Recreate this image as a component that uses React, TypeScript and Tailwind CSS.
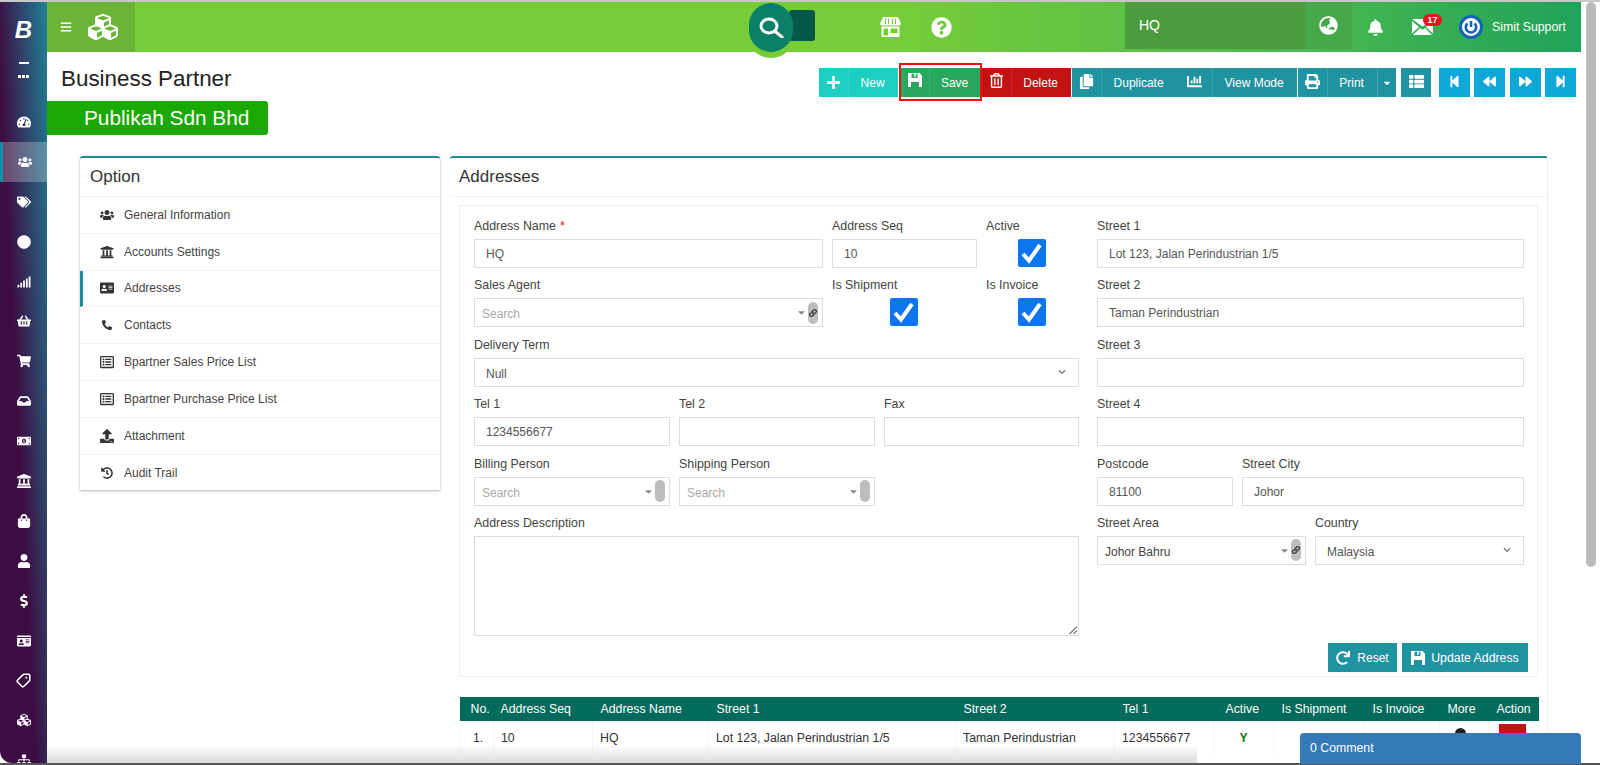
import type { ReactNode } from 'react';
import {
  FaAddressCard, FaBackward, FaBars, FaBell, FaCaretDown, FaChartBar, FaChevronDown, FaCircle, FaCopy,
  FaCubes, FaDollarSign, FaForward, FaGlobeAsia, FaHistory, FaIdCard, FaInbox, FaLandmark, FaLink, FaMoneyBillAlt,
  FaPhone, FaPlus, FaPrint, FaQuestionCircle, FaRedo, FaRegListAlt, FaRegTrashAlt, FaShoppingBag, FaShoppingBasket,
  FaShoppingCart, FaSignal, FaSitemap, FaStepBackward, FaStepForward, FaTachometerAlt, FaTags, FaThList,
  FaUniversity, FaUpload, FaUser, FaUsers,
} from 'react-icons/fa';
import { Tag } from 'lucide-react';

const SIDE_ICONS = [
  { icon: <FaTachometerAlt /> },
  { icon: <FaUsers />, active: true },
  { icon: <FaTags /> },
  { icon: <FaCircle /> },
  { icon: <FaSignal /> },
  { icon: <FaShoppingBasket /> },
  { icon: <FaShoppingCart /> },
  { icon: <FaInbox /> },
  { icon: <FaMoneyBillAlt /> },
  { icon: <FaLandmark /> },
  { icon: <FaShoppingBag /> },
  { icon: <FaUser /> },
  { icon: <FaDollarSign /> },
  { icon: <FaIdCard /> },
  { icon: <Tag size={15} strokeWidth={2.5} className="rotate-90" /> },
  { icon: <FaCubes /> },
  { icon: <FaSitemap /> },
];

const OPTIONS = [
  { label: 'General Information', icon: <FaUsers /> },
  { label: 'Accounts Settings', icon: <FaUniversity /> },
  { label: 'Addresses', icon: <FaAddressCard />, active: true },
  { label: 'Contacts', icon: <FaPhone className="text-[10px] scale-x-[-1]" /> },
  { label: 'Bpartner Sales Price List', icon: <FaRegListAlt /> },
  { label: 'Bpartner Purchase Price List', icon: <FaRegListAlt /> },
  { label: 'Attachment', icon: <FaUpload /> },
  { label: 'Audit Trail', icon: <FaHistory className="text-[12px]" /> },
];

function SaveIcon({ size = 14 }: { size?: number }) {
  return (
    <svg width={size} height={size} viewBox="0 0 14 14" fill="currentColor">
      <path fillRule="evenodd" d="M0 0H11.5L14 2.5V14H0ZM3.5 0.8V5H9.5V0.8H7.8V3.8H6.2V0.8ZM3 9V14H11V9Z" />
    </svg>
  );
}

function StoreIcon() {
  return (
    <svg width="21" height="20" viewBox="0 0 21 20" fill="currentColor">
      <path d="M3 0H18L21 6.5C21 8 19.8 8.6 18.8 8.6H2.2C1.2 8.6 0 8 0 6.5Z" />
      <path fill="#76cd38" d="M5 1.5H6V7H5ZM8 1.5H9V7H8ZM12 1.5H13V7H12ZM15 1.5H16V7H15Z" />
      <path fillRule="evenodd" d="M1.5 9.5H19.5V20H1.5ZM3.5 11.5V18.5H8V11.5ZM10.5 11.5V16H17.5V11.5Z" />
    </svg>
  );
}

function SearchGlyph() {
  return (
    <svg width="25" height="21" viewBox="0 0 25 21" fill="none" stroke="#fff" strokeWidth="3">
      <ellipse cx="10" cy="9" rx="8" ry="7" />
      <path d="M15.5 14L23 20" strokeLinecap="round" />
    </svg>
  );
}

function MailIcon() {
  return (
    <svg width="21" height="16" viewBox="0 0 21 16" fill="#fff">
      <path d="M0 0H21L10.5 7.5Z" />
      <path d="M0 2L7 8L0 14.5ZM21 2V14.5L14 8ZM8 9L10.5 11L13 9L20 16H1Z" />
    </svg>
  );
}

function PowerIcon() {
  return (
    <svg width="24" height="24" viewBox="0 0 24 24">
      <circle cx="12" cy="12" r="12" fill="#1463b5" />
      <circle cx="12" cy="12" r="9" fill="#fff" />
      <path d="M8.5 8.5A5.2 5.2 0 1 0 15.5 8.5" fill="none" stroke="#1463b5" strokeWidth="2.6" />
      <path d="M12 6V12" stroke="#1463b5" strokeWidth="2.6" />
    </svg>
  );
}

function Sidebar() {
  return (
    <aside className="w-[47px] shrink-0 rounded-bl-xl overflow-hidden text-white bg-[linear-gradient(87deg,#3c0d43_42%,#1f8296_100%)]">
      <div className="h-[60px] flex items-center justify-center pb-[4px] text-[24px] font-black italic">B</div>
      <div className="h-[40px] flex flex-col items-center">
        <div className="w-[10px] h-[2px] bg-white" />
        <div className="mt-[11px] flex gap-[1px]">
          <div className="w-[3px] h-[3px] bg-white" />
          <div className="w-[3px] h-[3px] bg-white" />
          <div className="w-[3px] h-[3px] bg-white" />
        </div>
      </div>
      {SIDE_ICONS.map((item, i) => (
        <div
          key={i}
          className={`h-[39.9px] flex items-center justify-center text-[14px] ${item.active ? 'bg-white/25 border-l-[3px] border-[#0d93a3]' : ''}`}
        >
          {item.icon}
        </div>
      ))}
    </aside>
  );
}

function Header() {
  return (
    <header className="h-[50px] shrink-0 flex items-center text-white bg-[linear-gradient(90deg,#76cd38_0%,#76cd38_55%,#4bb84e_82%,#1fa25a_100%)]">
      <div className="w-[88px] h-full flex items-center bg-[#6cb438] pl-[13px] gap-[16px]">
        <FaBars className="text-[12px]" />
        <FaCubes className="text-[30px]" />
      </div>
      <div className="ml-[614px] w-[66px] h-full relative">
        <div className="absolute left-[-2px] top-[28px] w-[48px] h-[28px] rounded-b-full bg-[#76cd38]" />
        <div className="absolute left-[40px] top-[8px] w-[26px] h-[31px] rounded-[3px] bg-[#05574a]" />
        <div className="absolute left-0 top-[1px] w-[44px] h-[49px] rounded-full bg-[#0b8068] flex items-center justify-center">
          <SearchGlyph />
        </div>
      </div>
      <span className="ml-[65px]"><StoreIcon /></span>
      <FaQuestionCircle className="ml-[30px] text-[21px]" />
      <div className="ml-[173px] w-[180px] h-[47px] mb-[3px] flex items-center pl-[14px] text-[14px] bg-[#4a9c3c]">HQ</div>
      <div className="w-[47px] h-[47px] mb-[3px] flex items-center justify-center text-[19px] bg-[#47a84a]">
        <FaGlobeAsia />
      </div>
      <FaBell className="ml-[15px] text-[17px]" />
      <div className="ml-[28px] relative">
        <MailIcon />
        <span className="absolute -top-[5px] -right-[9px] w-[19px] h-[12px] rounded-full bg-[#e8121f] text-[9px] font-bold leading-[12px] text-center">17</span>
      </div>
      <span className="ml-[26px]"><PowerIcon /></span>
      <span className="ml-[9px] text-[12.3px] whitespace-nowrap">Simit Support</span>
    </header>
  );
}

function ActionButton({
  icon,
  label,
  color,
  width,
  iconWidth = 'w-[30px]',
  iconPad = 'pb-[3px]',
  mark,
}: {
  icon: ReactNode;
  label: string;
  color: string;
  width: string;
  iconWidth?: string;
  iconPad?: string;
  mark?: boolean;
}) {
  return (
    <button className={`relative h-[29px] flex items-center text-white text-[12px] ${color} ${width}`}>
      <span className={`h-full flex items-center justify-center text-[15px] border-r border-white/10 shrink-0 ${iconWidth} ${iconPad}`}>{icon}</span>
      <span className="flex-1 text-center pr-[2px]">{label}</span>
      {mark && <span className="absolute -left-[1px] -right-[1px] -top-[5px] -bottom-[4px] border-2 border-[#f01010]" />}
    </button>
  );
}

function NavButton({ children }: { children: ReactNode }) {
  return <button className="w-[31px] h-[29px] flex items-center justify-center text-white text-[13px] pb-[2px] bg-[#0da8d8]">{children}</button>;
}

function Toolbar() {
  return (
    <div className="flex pt-[16px]">
      <ActionButton icon={<FaPlus />} label="New" color="bg-[#1dcfc0]" width="w-[79px]" iconPad="pb-0" />
      <div className="w-[2px]" />
      <ActionButton icon={<SaveIcon />} label="Save" color="bg-[#28a85e]" width="w-[81px]" iconPad="pb-[6px]" mark />
      <div className="w-[1px]" />
      <ActionButton icon={<FaRegTrashAlt />} label="Delete" color="bg-[#c31212]" width="w-[89px]" iconPad="pb-[4px]" />
      <div className="w-[1px]" />
      <ActionButton icon={<FaCopy />} label="Duplicate" color="bg-[#1f939f]" width="w-[105px]" />
      <ActionButton icon={<FaChartBar />} label="View Mode" color="bg-[#1f939f]" width="w-[120px]" iconWidth="w-[36px]" />
      <div className="w-[1px]" />
      <ActionButton icon={<FaPrint />} label="Print" color="bg-[#1f939f]" width="w-[79px]" />
      <button className="w-[19px] h-[29px] flex items-center justify-center text-white text-[10px] bg-[#1f939f] border-l border-white/20">
        <FaCaretDown />
      </button>
      <button className="ml-[5px] w-[30px] h-[29px] flex items-center justify-center text-white text-[15px] pb-[2px] bg-[#1f939f]">
        <FaThList />
      </button>
      <div className="ml-[8px] flex gap-[4.3px]">
        <NavButton><FaStepBackward /></NavButton>
        <NavButton><FaBackward /></NavButton>
        <NavButton><FaForward /></NavButton>
        <NavButton><FaStepForward /></NavButton>
      </div>
    </div>
  );
}

function OptionCard() {
  return (
    <section className="w-[360px] h-[334px] shrink-0 bg-white border-t-2 border-[#1f8a99] rounded-t-[3px] shadow-[0_1px_3px_rgba(0,0,0,0.3)]">
      <h2 className="h-[39px] flex items-center pl-[10px] text-[17px] text-[#333] border-b border-[#f2f2f2]">Option</h2>
      {OPTIONS.map(o => (
        <div
          key={o.label}
          className={`h-[36.8px] flex items-center text-[12px] text-[#444] border-b border-[#f4f4f4] last:border-b-0 ${o.active ? 'border-l-[3px] border-l-[#1f8a99] pl-[16px]' : 'pl-[19px]'}`}
        >
          <span className="w-[15px] flex justify-center text-[14px] text-[#333]">{o.icon}</span>
          <span className="ml-[10px]">{o.label}</span>
        </div>
      ))}
    </section>
  );
}

function Field({ label, width, required, children }: { label?: string; width: string; required?: boolean; children: ReactNode }) {
  return (
    <div className={`shrink-0 ${width}`}>
      <div className="h-[24px] leading-[22px] text-[12.4px] text-[#444] whitespace-nowrap">
        {label}
        {required && <span className="ml-[4px] text-[#e01010]">*</span>}
      </div>
      {children}
    </div>
  );
}

function TextBox({ value }: { value?: string }) {
  return <div className="h-[29px] border border-[#ddd] flex items-center pl-[11px] pt-[1px] text-[12px] text-[#555]">{value}</div>;
}

function SelectBox({ value }: { value: string }) {
  return (
    <div className="h-[29px] border border-[#ddd] flex items-center justify-between pl-[11px] pr-[12px] text-[12px] text-[#555]">
      <span className="pt-[3px]">{value}</span>
      <FaChevronDown className="text-[8px] text-[#777]" />
    </div>
  );
}

function SearchBox({ value, link }: { value?: string; link?: boolean }) {
  return (
    <div className="h-[29px] border border-[#ddd] flex items-center pl-[7px] text-[12px]">
      <span className={`pt-[3px] ${value ? 'text-[#444]' : 'text-[#aaa]'}`}>{value ?? 'Search'}</span>
      <FaCaretDown className="ml-auto text-[11px] text-[#888]" />
      <span className="ml-[1px] mr-[4px] w-[10px] h-[22px] rounded-full bg-[#bdbdbd] flex items-center justify-center text-[8px] text-[#333]">
        {link && <FaLink />}
      </span>
    </div>
  );
}

function CheckBox() {
  return (
    <div className="w-[28px] h-[28px] rounded-[2px] bg-[#0b76ef] flex items-center justify-center">
      <svg width="28" height="28" viewBox="0 0 28 28" fill="none" stroke="#fff" strokeWidth="4">
        <path d="M5 15L11 21.5L22 6" />
      </svg>
    </div>
  );
}

function Row({ children }: { children: ReactNode }) {
  return <div className="h-[59.4px] flex gap-[9px]">{children}</div>;
}

function AddressForm() {
  return (
    <div className="relative h-[472px] mx-[9px] mt-[8px] border border-[#eee] pl-[14px] pt-[9px] flex">
      <div className="w-[605px] shrink-0">
        <Row>
          <Field label="Address Name" required width="w-[349px]"><TextBox value="HQ" /></Field>
          <Field label="Address Seq" width="w-[145px]"><TextBox value="10" /></Field>
          <Field label="Active" width="w-[60px]"><div className="pl-[32px]"><CheckBox /></div></Field>
        </Row>
        <Row>
          <Field label="Sales Agent" width="w-[349px]"><SearchBox link /></Field>
          <Field label="Is Shipment" width="w-[145px]"><div className="pl-[58px]"><CheckBox /></div></Field>
          <Field label="Is Invoice" width="w-[60px]"><div className="pl-[32px]"><CheckBox /></div></Field>
        </Row>
        <Row>
          <Field label="Delivery Term" width="w-[605px]"><SelectBox value="Null" /></Field>
        </Row>
        <Row>
          <Field label="Tel 1" width="w-[196px]"><TextBox value="1234556677" /></Field>
          <Field label="Tel 2" width="w-[196px]"><TextBox /></Field>
          <Field label="Fax" width="w-[195px]"><TextBox /></Field>
        </Row>
        <Row>
          <Field label="Billing Person" width="w-[196px]"><SearchBox /></Field>
          <Field label="Shipping Person" width="w-[196px]"><SearchBox /></Field>
        </Row>
        <Field label="Address Description" width="w-[605px]">
          <div className="relative h-[100px] border border-[#ddd]">
            <span className="absolute right-[1px] bottom-[1px] w-[8px] h-[8px] bg-[linear-gradient(135deg,transparent_50%,#888_50%,#888_60%,transparent_60%,transparent_75%,#888_75%,#888_85%,transparent_85%)]" />
          </div>
        </Field>
      </div>
      <div className="w-[427px] ml-[18px] shrink-0">
        <Row><Field label="Street 1" width="w-[427px]"><TextBox value="Lot 123, Jalan Perindustrian 1/5" /></Field></Row>
        <Row><Field label="Street 2" width="w-[427px]"><TextBox value="Taman Perindustrian" /></Field></Row>
        <Row><Field label="Street 3" width="w-[427px]"><TextBox /></Field></Row>
        <Row><Field label="Street 4" width="w-[427px]"><TextBox /></Field></Row>
        <Row>
          <Field label="Postcode" width="w-[136px]"><TextBox value="81100" /></Field>
          <Field label="Street City" width="w-[282px]"><TextBox value="Johor" /></Field>
        </Row>
        <Row>
          <Field label="Street Area" width="w-[209px]"><SearchBox value="Johor Bahru" link /></Field>
          <Field label="Country" width="w-[209px]"><SelectBox value="Malaysia" /></Field>
        </Row>
        <div className="mt-[72px] flex justify-end gap-[5px] -mr-[4px]">
          <button className="w-[69px] h-[29px] flex items-center justify-center gap-[7px] bg-[#1f939f] text-white text-[12px]">
            <FaRedo className="text-[14px]" />Reset
          </button>
          <button className="w-[126px] h-[29px] flex items-center justify-center gap-[6px] bg-[#1f939f] text-white text-[12.3px]">
            <SaveIcon />Update Address
          </button>
        </div>
      </div>
    </div>
  );
}

const COLUMNS = [
  { label: 'No.', width: 'w-[34px]', pad: 'pl-[11px]' },
  { label: 'Address Seq', width: 'w-[99px]', pad: 'pl-[7px]' },
  { label: 'Address Name', width: 'w-[116px]', pad: 'pl-[8px]' },
  { label: 'Street 1', width: 'w-[247px]', pad: 'pl-[8px]' },
  { label: 'Street 2', width: 'w-[159px]', pad: 'pl-[8px]' },
  { label: 'Tel 1', width: 'w-[99px]', pad: 'pl-[8px]' },
  { label: 'Active', width: 'w-[60px]', pad: 'pl-[12px]' },
  { label: 'Is Shipment', width: 'w-[91px]', pad: 'pl-[8px]' },
  { label: 'Is Invoice', width: 'w-[75px]', pad: 'pl-[8px]' },
  { label: 'More', width: 'w-[49px]', pad: 'pl-[8px]' },
  { label: 'Action', width: 'w-[50px]', pad: 'pl-[8px]' },
];

function AddressTable() {
  return (
    <table className="mx-[9px] mt-[20px] w-[1079px] table-fixed text-[12.3px] text-left">
      <thead>
        <tr className="h-[24px] bg-[#036b5b] text-white">
          {COLUMNS.map(c => (
            <th key={c.label} className={`${c.width} ${c.pad} font-normal whitespace-nowrap`}>{c.label}</th>
          ))}
        </tr>
      </thead>
      <tbody>
        <tr className="h-[34px] text-[#333] [&>td]:border-l [&>td]:border-[#f6f6f6] [&>td]:pl-[7px]">
          <td className="!pl-[13px]">1.</td>
          <td>10</td>
          <td>HQ</td>
          <td>Lot 123, Jalan Perindustrian 1/5</td>
          <td>Taman Perindustrian</td>
          <td>1234556677</td>
          <td className="!pl-0 text-center font-bold text-[#0a7d0a]">Y</td>
          <td />
          <td />
          <td>
            <span className="block ml-[8px] mb-[10px] w-[11px] h-[11px] rounded-full bg-[#222]" />
          </td>
          <td>
            <span className="block ml-[3px] mb-[3px] w-[27px] h-[26px] bg-[#c31212]" />
          </td>
        </tr>
      </tbody>
    </table>
  );
}

export default function App() {
  return (
    <div className="relative h-[765px] w-[1600px] overflow-hidden bg-white font-['Liberation_Sans',Arial,sans-serif]">
      <div className="h-[2px] bg-[#c8c8c8]" />
      <div className="flex h-[761px]">
        <Sidebar />
        <main className="w-[1534px] shrink-0 flex flex-col overflow-hidden">
          <Header />
          <div className="flex justify-between pr-[5px]">
            <div>
              <h1 className="h-[49px] pl-[14px] pt-[13px] text-[22.4px] leading-[28px] text-[#222]">Business Partner</h1>
              <div className="w-[221px] h-[34px] rounded-r-[3px] bg-[#19a900] text-white text-[20.8px] leading-[34px] pl-[37px]">Publikah Sdn Bhd</div>
            </div>
            <Toolbar />
          </div>
          <div className="mt-[21px] ml-[33px] flex gap-[10px] items-start">
            <OptionCard />
            <section className="w-[1098px] h-[620px] shrink-0 bg-white border-t-2 border-[#1f8a99] border-r border-r-[#eee] rounded-t-[3px]">
              <h2 className="h-[39px] flex items-center pl-[9px] text-[17px] text-[#333] border-b border-[#f2f2f2]">Addresses</h2>
              <AddressForm />
              <AddressTable />
            </section>
          </div>
        </main>
        <div className="flex-1 pl-[5px] pr-[4px]">
          <div className="h-[565px] rounded-full bg-[#bbbbbb]" />
        </div>
      </div>
      <div className="h-[2px] bg-[#555]" />
      <div className="absolute left-[1300px] top-[733px] w-[281px] h-[31px] rounded-t-[4px] bg-[#337ab7] text-white text-[12.3px] leading-[31px] pl-[10px]">0 Comment</div>
      <div className="absolute left-[47px] top-[745px] w-[1150px] h-[18px] pointer-events-none bg-[linear-gradient(180deg,transparent,rgba(0,0,0,0.14))]" />
    </div>
  );
}
